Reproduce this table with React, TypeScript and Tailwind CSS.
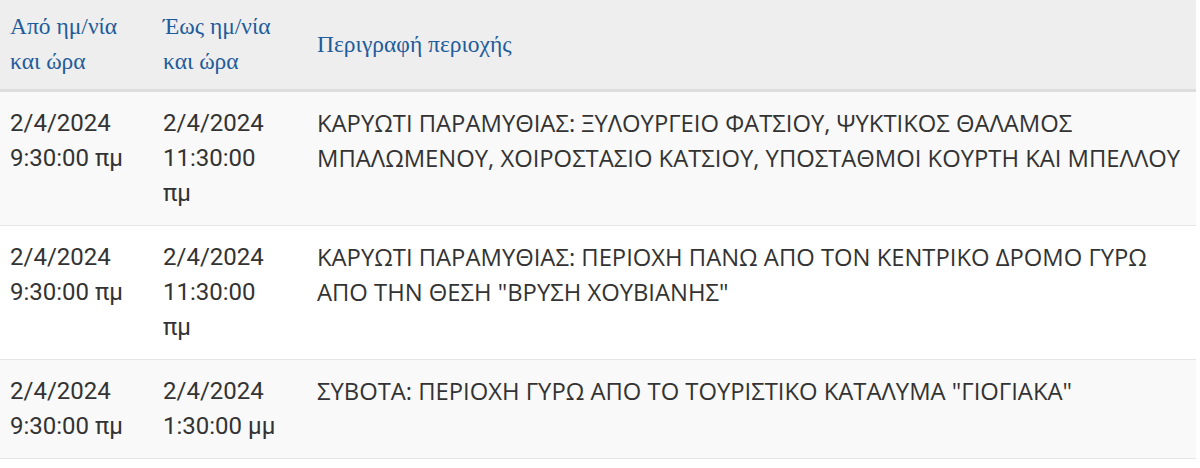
import React from "react";

const rows = [
  {
    from: ["2/4/2024", "9:30:00 πμ"],
    to: "2/4/2024 11:30:00 πμ",
    desc: "ΚΑΡΥΩΤΙ ΠΑΡΑΜΥΘΙΑΣ: ΞΥΛΟΥΡΓΕΙΟ ΦΑΤΣΙΟΥ, ΨΥΚΤΙΚΟΣ ΘΑΛΑΜΟΣ ΜΠΑΛΩΜΕΝΟΥ, ΧΟΙΡΟΣΤΑΣΙΟ ΚΑΤΣΙΟΥ, ΥΠΟΣΤΑΘΜΟΙ ΚΟΥΡΤΗ ΚΑΙ ΜΠΕΛΛΟΥ",
  },
  {
    from: ["2/4/2024", "9:30:00 πμ"],
    to: "2/4/2024 11:30:00 πμ",
    desc: 'ΚΑΡΥΩΤΙ ΠΑΡΑΜΥΘΙΑΣ: ΠΕΡΙΟΧΗ ΠΑΝΩ ΑΠΟ ΤΟΝ ΚΕΝΤΡΙΚΟ ΔΡΟΜΟ ΓΥΡΩ ΑΠΟ ΤΗΝ ΘΕΣΗ "ΒΡΥΣΗ ΧΟΥΒΙΑΝΗΣ"',
  },
  {
    from: ["2/4/2024", "9:30:00 πμ"],
    to: "2/4/2024 1:30:00 μμ",
    desc: 'ΣΥΒΟΤΑ: ΠΕΡΙΟΧΗ ΓΥΡΩ ΑΠΟ ΤΟ ΤΟΥΡΙΣΤΙΚΟ ΚΑΤΑΛΥΜΑ "ΓΙΟΓΙΑΚΑ"',
  },
];

const th =
  "px-[10px] py-[9px] text-left align-middle font-normal text-[23.5px] leading-[35px] text-[#1f5c9b] [font-family:'Liberation_Serif','DejaVu_Serif',serif]";

export default function App() {
  return (
    <div className="w-[1200px] h-[468px] bg-white overflow-hidden">
      <table className="w-[1196px] border-collapse table-fixed">
        <colgroup>
          <col className="w-[153px]" />
          <col className="w-[154px]" />
          <col />
        </colgroup>
        <thead>
          <tr className="bg-[#eeeeee] border-b-[3px] border-[#dddddd]">
            <th className={`h-[90px] ${th}`}>
              Από ημ/νία
              <br />
              και ώρα
            </th>
            <th className={th}>
              Έως ημ/νία
              <br />
              και ώρα
            </th>
            <th className={th}>Περιγραφή περιοχής</th>
          </tr>
        </thead>
        <tbody>
          {rows.map((r, i) => (
            <tr
              key={i}
              className={`border-b border-[#e5e5e5] ${i % 2 === 0 ? "bg-[#f9f9f9]" : "bg-white"}`}
            >
              <td className="pl-[10px] pr-[10px] py-[14px] align-top text-[24px] leading-[35px] text-[#333333] [font-family:Roboto,'Liberation_Sans',sans-serif]">
                {r.from[0]}
                <br />
                {r.from[1]}
              </td>
              <td className="pl-[10px] pr-[24px] py-[14px] align-top text-[24px] leading-[35px] text-[#333333] [font-family:Roboto,'Liberation_Sans',sans-serif]">
                {r.to}
              </td>
              <td className="pl-[10px] pr-0 py-[14px] align-top text-[23.8px] leading-[35px] text-[#333333] [font-family:'Open_Sans','Liberation_Sans',sans-serif]">
                {r.desc}
              </td>
            </tr>
          ))}
        </tbody>
      </table>
    </div>
  );
}
